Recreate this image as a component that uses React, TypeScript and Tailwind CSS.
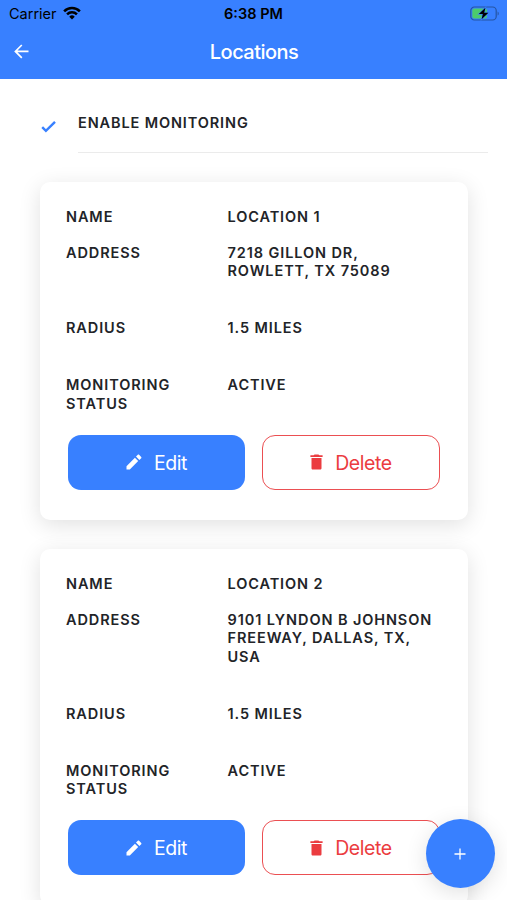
import React from "react";

type Location = {
  name: string;
  address: string[];
  radius: string;
  status: string;
};

const locations: Location[] = [
  {
    name: "Location 1",
    address: ["7218 Gillon Dr,", "Rowlett, TX 75089"],
    radius: "1.5 miles",
    status: "Active",
  },
  {
    name: "Location 2",
    address: ["9101 Lyndon B Johnson", "Freeway, Dallas, TX,", "USA"],
    radius: "1.5 miles",
    status: "Active",
  },
];

const StatusBar = () => (
  <div className="grid h-7 grid-cols-3 items-center pl-[9px] pr-[7px] text-black">
    <div className="flex items-center gap-[6px] text-[14.5px] leading-none">
      <span>Carrier</span>
      <svg className="-mt-[2px]" width="18" height="14" viewBox="0 0 19 14" fill="none" stroke="currentColor" strokeWidth="2.7">
        <path d="M1.2 5.2a11.8 11.8 0 0 1 16.6 0" />
        <path d="M4.3 8.4a7.4 7.4 0 0 1 10.4 0" />
        <path d="M9.5 13.8 6.6 10.9a4.1 4.1 0 0 1 5.8 0z" fill="currentColor" stroke="none" />
      </svg>
    </div>
    <div className="-ml-[2px] text-center text-[14.5px] font-semibold leading-none">6:38 PM</div>
    <svg className="-mt-[2px] justify-self-end" width="30" height="15" viewBox="0 0 30 15" fill="none">
      <rect x="0.8" y="1" width="25.4" height="13" rx="3.6" stroke="#2554a3" strokeWidth="1.2" />
      <rect x="2.3" y="2.5" width="14.7" height="10" rx="2" fill="#4ccb6b" />
      <path d="M27.6 5.4c1.5.6 1.5 3.6 0 4.2z" fill="#2554a3" />
      <path
        d="M15.4 1.8 8.8 8.1h4l-1.2 5.1 6.8-6.4h-4.2z"
        fill="#000"
        stroke="#3880ff"
        strokeWidth="1.2"
        paintOrder="stroke"
      />
    </svg>
  </div>
);

const Header = () => (
  <header className="h-[79px] bg-[#3880ff]">
    <StatusBar />
    <div className="grid h-[48px] grid-cols-[1fr_auto_1fr] items-center pl-[14px] pr-[13px] text-white">
      <button type="button" aria-label="Back" className="-mt-[2px]">
        <svg width="15" height="15" viewBox="0 0 15 15" fill="none" stroke="currentColor" strokeWidth="1.7">
          <path d="M7.8 1 1.4 7.4l6.4 6.4M1.4 7.4h13.1" />
        </svg>
      </button>
      <h1 className="text-[20px] font-medium tracking-[-0.55px]">Locations</h1>
    </div>
  </header>
);

const LocationCard = ({ location }: { location: Location }) => (
  <section className="rounded-[10px] bg-white px-[26px] pb-[30.2px] pt-[26.2px] shadow-[0_5px_22px_rgba(0,0,0,0.12)]">
    <dl className="grid grid-cols-[161.5px_1fr] text-[14.5px] font-semibold uppercase leading-[18.4px] tracking-[0.9px] text-[#222428]">
      <dt>Name</dt>
      <dd>{location.name}</dd>
      <dt className="mt-[17.4px]">Address</dt>
      <dd className="mt-[17.4px]">
        {location.address.map((line) => (
          <span key={line} className="block whitespace-nowrap">
            {line}
          </span>
        ))}
      </dd>
      <dt className="mt-[38.4px]">Radius</dt>
      <dd className="mt-[38.4px]">{location.radius}</dd>
      <dt className="mt-[38.8px]">
        Monitoring
        <br />
        Status
      </dt>
      <dd className="mt-[38.8px]">{location.status}</dd>
    </dl>
    <div className="ml-[2px] mt-[21.6px] flex gap-[17px] text-[19.5px] tracking-[-0.4px]">
      <button
        type="button"
        className="flex h-[55px] w-[177px] items-center justify-center gap-[12px] rounded-[13px] bg-[#3880ff] text-white"
      >
        <svg width="16" height="16" viewBox="0 0 16 16" fill="currentColor">
          <path d="M.5 12.2V15.5h3.3l8.4-8.4-3.3-3.3zM15.2 4.2c.4-.4.4-.9 0-1.3L13.1.8c-.4-.4-.9-.4-1.3 0l-1.8 1.8 3.4 3.4z" />
        </svg>
        <span className="pt-[2px]">Edit</span>
      </button>
      <button
        type="button"
        className="flex h-[55px] w-[178px] items-center justify-center gap-[12px] rounded-[13px] border border-[#eb4f52] text-[#eb3c40]"
      >
        <svg width="13" height="16" viewBox="0 0 13 16" fill="currentColor">
          <path d="M1.5 4h10v10.2c0 .8-.6 1.3-1.3 1.3H2.8c-.7 0-1.3-.5-1.3-1.3zM.4 1.3h3.2L4.6.4h3.8l1 .9h3.2V2.9H.4z" />
        </svg>
        <span className="pt-[2px]">Delete</span>
      </button>
    </div>
  </section>
);

const App = () => {
  return (
    <div className="relative h-[900px] w-[507px] overflow-hidden bg-white font-['Inter',sans-serif]">
      <Header />
      <main>
        <div className="flex h-[74px] pl-[41px] pr-[19px]">
          <svg className="mt-[41px]" width="15" height="13" viewBox="0 0 15 13" fill="none">
            <path d="M1.2 7.2 4.9 10.9 14 1.8" stroke="#3880ff" strokeWidth="2.4" />
          </svg>
          <div className="ml-[22px] flex-1 border-b border-[#ebebeb] pt-[35.4px] text-[14.5px] font-semibold uppercase leading-[18.4px] tracking-[0.88px] text-[#222428]">
            Enable Monitoring
          </div>
        </div>
        <div className="mt-[29px] flex flex-col gap-[29px] pl-[40px] pr-[39px]">
          {locations.map((location) => (
            <LocationCard key={location.name} location={location} />
          ))}
        </div>
      </main>

      {/* Add location */}
      <button
        type="button"
        aria-label="Add location"
        className="absolute bottom-[12px] right-[12px] flex size-[69px] items-center justify-center rounded-full bg-[#3880ff] pr-px text-white shadow-[0_5px_22px_rgba(0,0,0,0.12)]"
      >
        <svg width="12" height="12" viewBox="0 0 12 12" stroke="currentColor" strokeWidth="1.3">
          <path d="M6 .5v11M.5 6h11" />
        </svg>
      </button>
    </div>
  );
};

export default App;
